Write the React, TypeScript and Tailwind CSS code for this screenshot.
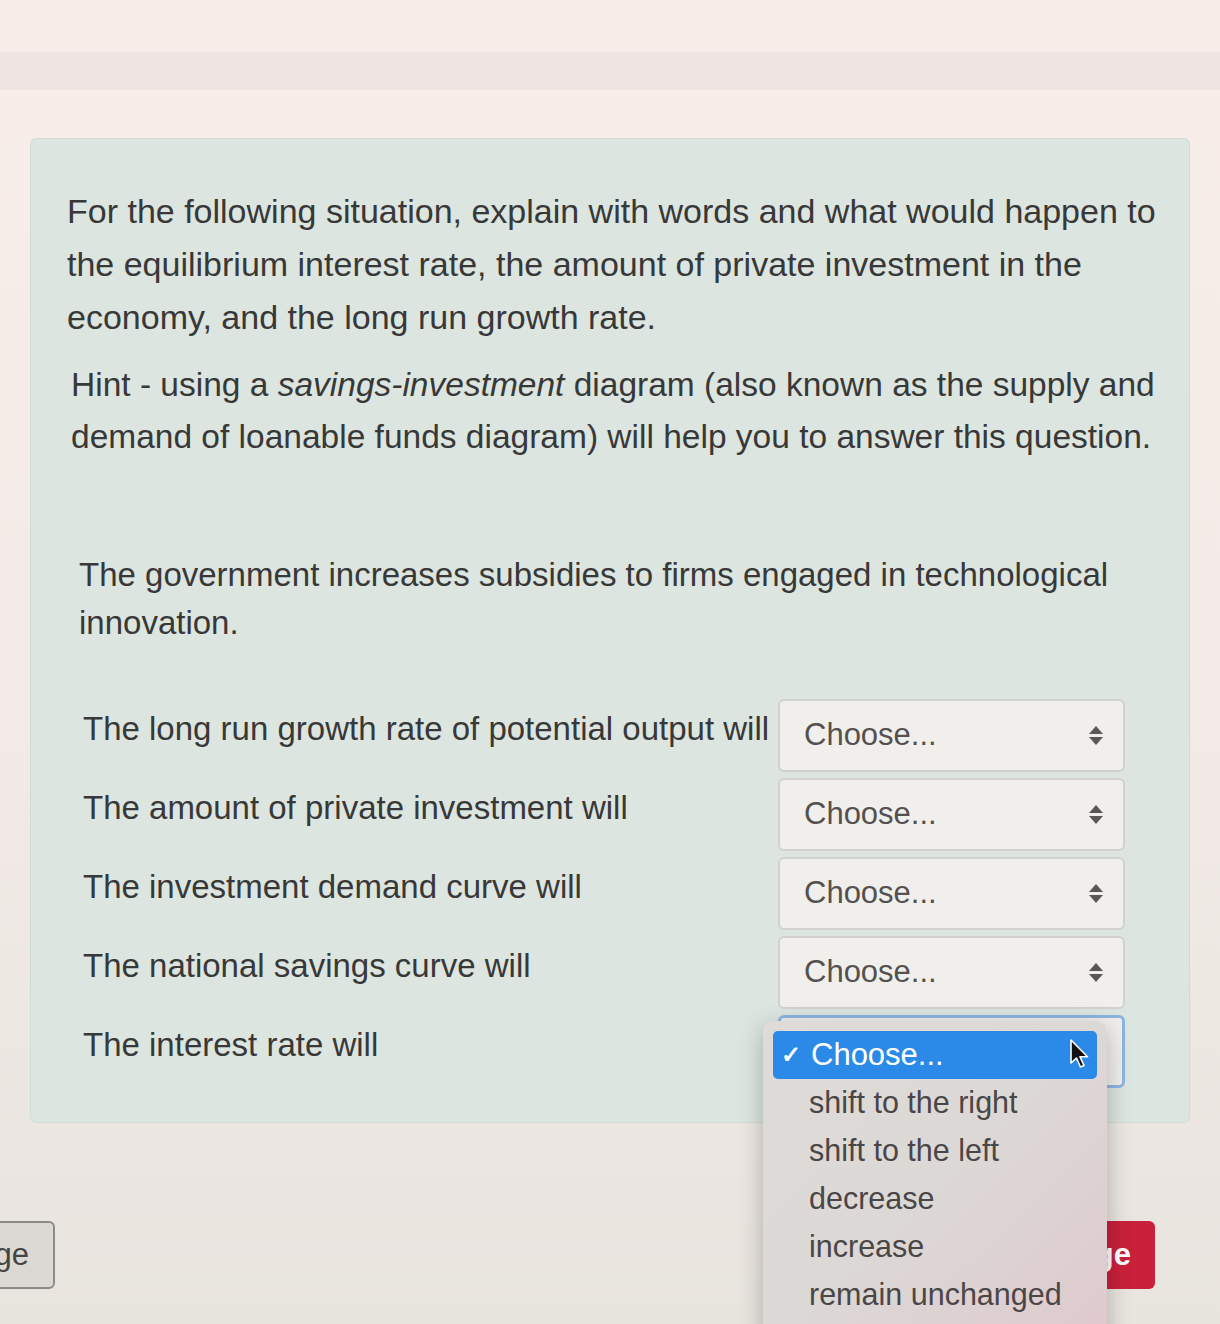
const rows = [
  'The long run growth rate of potential output will',
  'The amount of private investment will',
  'The investment demand curve will',
  'The national savings curve will',
  'The interest rate will',
]

const options = ['shift to the right', 'shift to the left', 'decrease', 'increase', 'remain unchanged']

function SelectBox({ focused, children }: { focused?: boolean, children?: React.ReactNode }) {
  return (
    <div
      className={
        focused
          ? 'relative h-[73px] w-[347px] shrink-0 rounded-[6px] border-[3px] border-[#8db5e2] bg-[#f1efec]'
          : 'relative h-[73px] w-[347px] shrink-0 rounded-[6px] border-2 border-[#d3d1cd] bg-[#f1efec]'
      }
    >
      <div className="flex h-full items-center justify-between pl-[24px] pr-[20px]">
        <span className="text-[31px] text-[#545150]">Choose...</span>
        <span className="flex flex-col items-center">
          <svg width="14" height="8" viewBox="0 0 14 8"><path d="M7 0 L14 8 L0 8 Z" fill="#5a5755" /></svg>
          <svg width="14" height="8" viewBox="0 0 14 8" className="mt-[3px]"><path d="M0 0 L14 0 L7 8 Z" fill="#5a5755" /></svg>
        </span>
      </div>
      {children}
    </div>
  )
}

function Menu() {
  return (
    <div className="absolute left-[-18px] top-[3px] z-20 w-[344px] rounded-[10px] bg-gradient-to-br from-[#dedbd8] via-[#dcd8d6] to-[#dfc8cc] pb-[40px] pt-[10px] shadow-[0_6px_24px_rgba(0,0,0,0.25)]">
      <div className="mx-[10px] flex h-[48px] items-center justify-between rounded-[5px] bg-[#2b8ae8] pl-[8px] pr-[6px]">
        <span className="flex items-center text-[31px] text-white">
          <span className="w-[30px] text-[24px] font-bold">✓</span>
          Choose...
        </span>
        <svg width="22" height="32" viewBox="0 0 22 32">
          <path d="M2 1 L2 24 L7.5 19 L11.5 28 L15 26.5 L11 17.8 L18.5 17.8 Z" fill="#111" stroke="#fff" strokeWidth="1.6" strokeLinejoin="round" />
        </svg>
      </div>
      {options.map(o => (
        <div key={o} className="flex h-[48px] items-center pl-[46px] text-[30.5px] text-[#4a4646]">
          {o}
        </div>
      ))}
    </div>
  )
}

export default function App() {
  return (
    <div className="h-[1324px] w-[1220px] overflow-hidden bg-gradient-to-b from-[#f8ede9] via-[#f3ebe7] to-[#e8e4de] font-['Liberation_Sans',Arial,sans-serif]">
      <div className="h-[52px] bg-[#f8ece9]" />
      <div className="h-[38px] bg-[#efe4e2]" />

      <div className="mx-[30px] mt-[48px] rounded-[6px] border border-[#d2dbd6] bg-[#dce5df] pb-[34px] pl-[44px] pr-[64px] pt-[46px] text-[#383838]">
        <p className="-ml-[8px] whitespace-nowrap text-[34px] leading-[53px]">
          For the following situation, explain with words and what would happen to
          <br />
          the equilibrium interest rate, the amount of private investment in the
          <br />
          economy, and the long run growth rate.
        </p>
        <p className="-ml-[4px] mt-[15px] whitespace-nowrap text-[33.5px] leading-[52px]">
          Hint - using a
          {' '}
          <em>savings-investment</em>
          {' '}
          diagram (also known as the supply and
          <br />
          demand of loanable funds diagram) will help you to answer this question.
        </p>

        <p className="mt-[88px] whitespace-nowrap pl-[4px] text-[33px] leading-[48px]">
          The government increases subsidies to firms engaged in technological
          <br />
          innovation.
        </p>

        <div className="mt-[52px] flex flex-col gap-[6px] pl-[8px]">
          {rows.map((r, i) => (
            <div key={r} className="flex items-start justify-between">
              <span className="whitespace-nowrap pt-[10px] text-[33px] leading-[40px]">{r}</span>
              <SelectBox focused={i === rows.length - 1}>
                {i === rows.length - 1 && <Menu />}
              </SelectBox>
            </div>
          ))}
        </div>
      </div>

      <div className="mt-[98px] flex items-start justify-between pr-[65px]">
        <button className="-ml-[185px] flex h-[68px] w-[240px] items-center justify-end rounded-[6px] border-2 border-[#8d8b88] bg-[#dcd9d4] pr-[24px] text-[31px] text-[#444]">
          Previous page
        </button>
        <button className="flex h-[68px] items-center rounded-[6px] bg-[#c9203b] pl-[20px] pr-[24px] text-[31px] font-bold text-white">
          Next page
        </button>
      </div>
    </div>
  )
}
